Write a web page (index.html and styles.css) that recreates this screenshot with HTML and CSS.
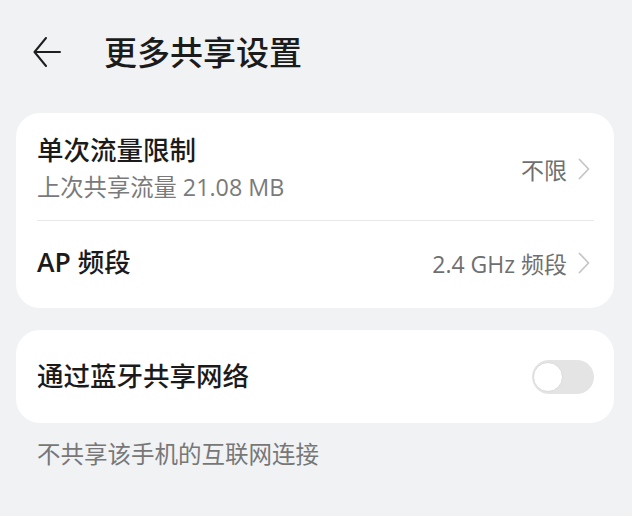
FILE: index.html
```html
<!DOCTYPE html>
<html lang="zh-CN">
<head>
  <meta charset="UTF-8">
  <meta name="viewport" content="width=device-width, initial-scale=1.0">
  <title>更多共享设置</title>
  <link rel="stylesheet" href="styles.css">
</head>
<body>
  <div class="cabecera">
    <svg class="atras" width="28" height="30" viewBox="0 0 28 30">
      <path d="M27 15 H2 M13 1 L1.5 15 L13 29" fill="none" stroke="#1f1f1f" stroke-width="2" stroke-linecap="round" stroke-linejoin="round"/>
    </svg>
    <h1 class="titulo">更多共享设置</h1>
  </div>

  <div class="tarjeta">
    <div class="fila fila-alta">
      <div class="textos">
        <div class="nombre">单次流量限制</div>
        <div class="detalle">上次共享流量 21.08 MB</div>
      </div>
      <div class="valor">不限<svg class="flecha" width="12" height="22" viewBox="0 0 12 22"><path d="M1.5 1.5 L10.5 11 L1.5 20.5" fill="none" stroke="#c6c6c6" stroke-width="1.8" stroke-linecap="round" stroke-linejoin="round"/></svg></div>
    </div>
    <div class="linea"></div>
    <div class="fila fila-baja">
      <div class="nombre"><span class="latin">AP</span> 频段</div>
      <div class="valor">2.4 GHz 频段<svg class="flecha" width="12" height="22" viewBox="0 0 12 22"><path d="M1.5 1.5 L10.5 11 L1.5 20.5" fill="none" stroke="#c6c6c6" stroke-width="1.8" stroke-linecap="round" stroke-linejoin="round"/></svg></div>
    </div>
  </div>

  <div class="tarjeta tarjeta-dos">
    <div class="fila fila-interruptor">
      <div class="nombre">通过蓝牙共享网络</div>
      <div class="interruptor"><span class="bola"></span></div>
    </div>
  </div>

  <p class="nota">不共享该手机的互联网连接</p>
</body>
</html>
```

FILE: styles.css
```css
body {
  margin: 0;
  padding: 0 18px 0 16px;
  background-color: #f1f2f4;
  font-family: "Open Sans", "Noto Sans CJK SC", sans-serif;
  color: #1b1b1b;
}
.cabecera {
  height: 104px;
  display: flex;
  align-items: center;
  padding-left: 17px;
}
.atras {
  display: block;
}
.titulo {
  margin: 0 0 0 43px;
  font-size: 33px;
  font-weight: 500;
  line-height: 1;
}
.tarjeta {
  margin-top: 9px;
  background-color: #ffffff;
  border-radius: 24px;
  padding: 0 20px 0 21px;
}
.tarjeta-dos {
  margin-top: 22px;
}
.fila {
  display: flex;
  align-items: center;
  justify-content: space-between;
}
.fila-alta {
  height: 103px;
  padding-top: 4px;
}
.fila-baja {
  height: 84px;
  padding-bottom: 3px;
}
.fila-interruptor {
  height: 93px;
}
.nombre {
  font-size: 26.5px;
  font-weight: 500;
  line-height: 1.2;
}
.latin {
  font-weight: 600;
}
.detalle {
  font-size: 23.3px;
  color: #7a7a7a;
  margin-top: 7px;
  line-height: 1.2;
}
.valor {
  display: flex;
  align-items: center;
  font-size: 23px;
  color: #6f6f6f;
}
.flecha {
  display: block;
  margin: 0 4px 0 11px;
}
.linea {
  height: 1px;
  background-color: #e8e8e8;
}
.interruptor {
  width: 62px;
  height: 34px;
  border-radius: 17px;
  background-color: #e4e4e4;
  position: relative;
}
.bola {
  position: absolute;
  left: 1px;
  top: 2px;
  width: 28px;
  height: 28px;
  border: 1px solid #dadada;
  border-radius: 50%;
  background-color: #ffffff;
}
.nota {
  margin: 13px 0 0 21px;
  font-size: 23.5px;
  color: #777777;
}
```
